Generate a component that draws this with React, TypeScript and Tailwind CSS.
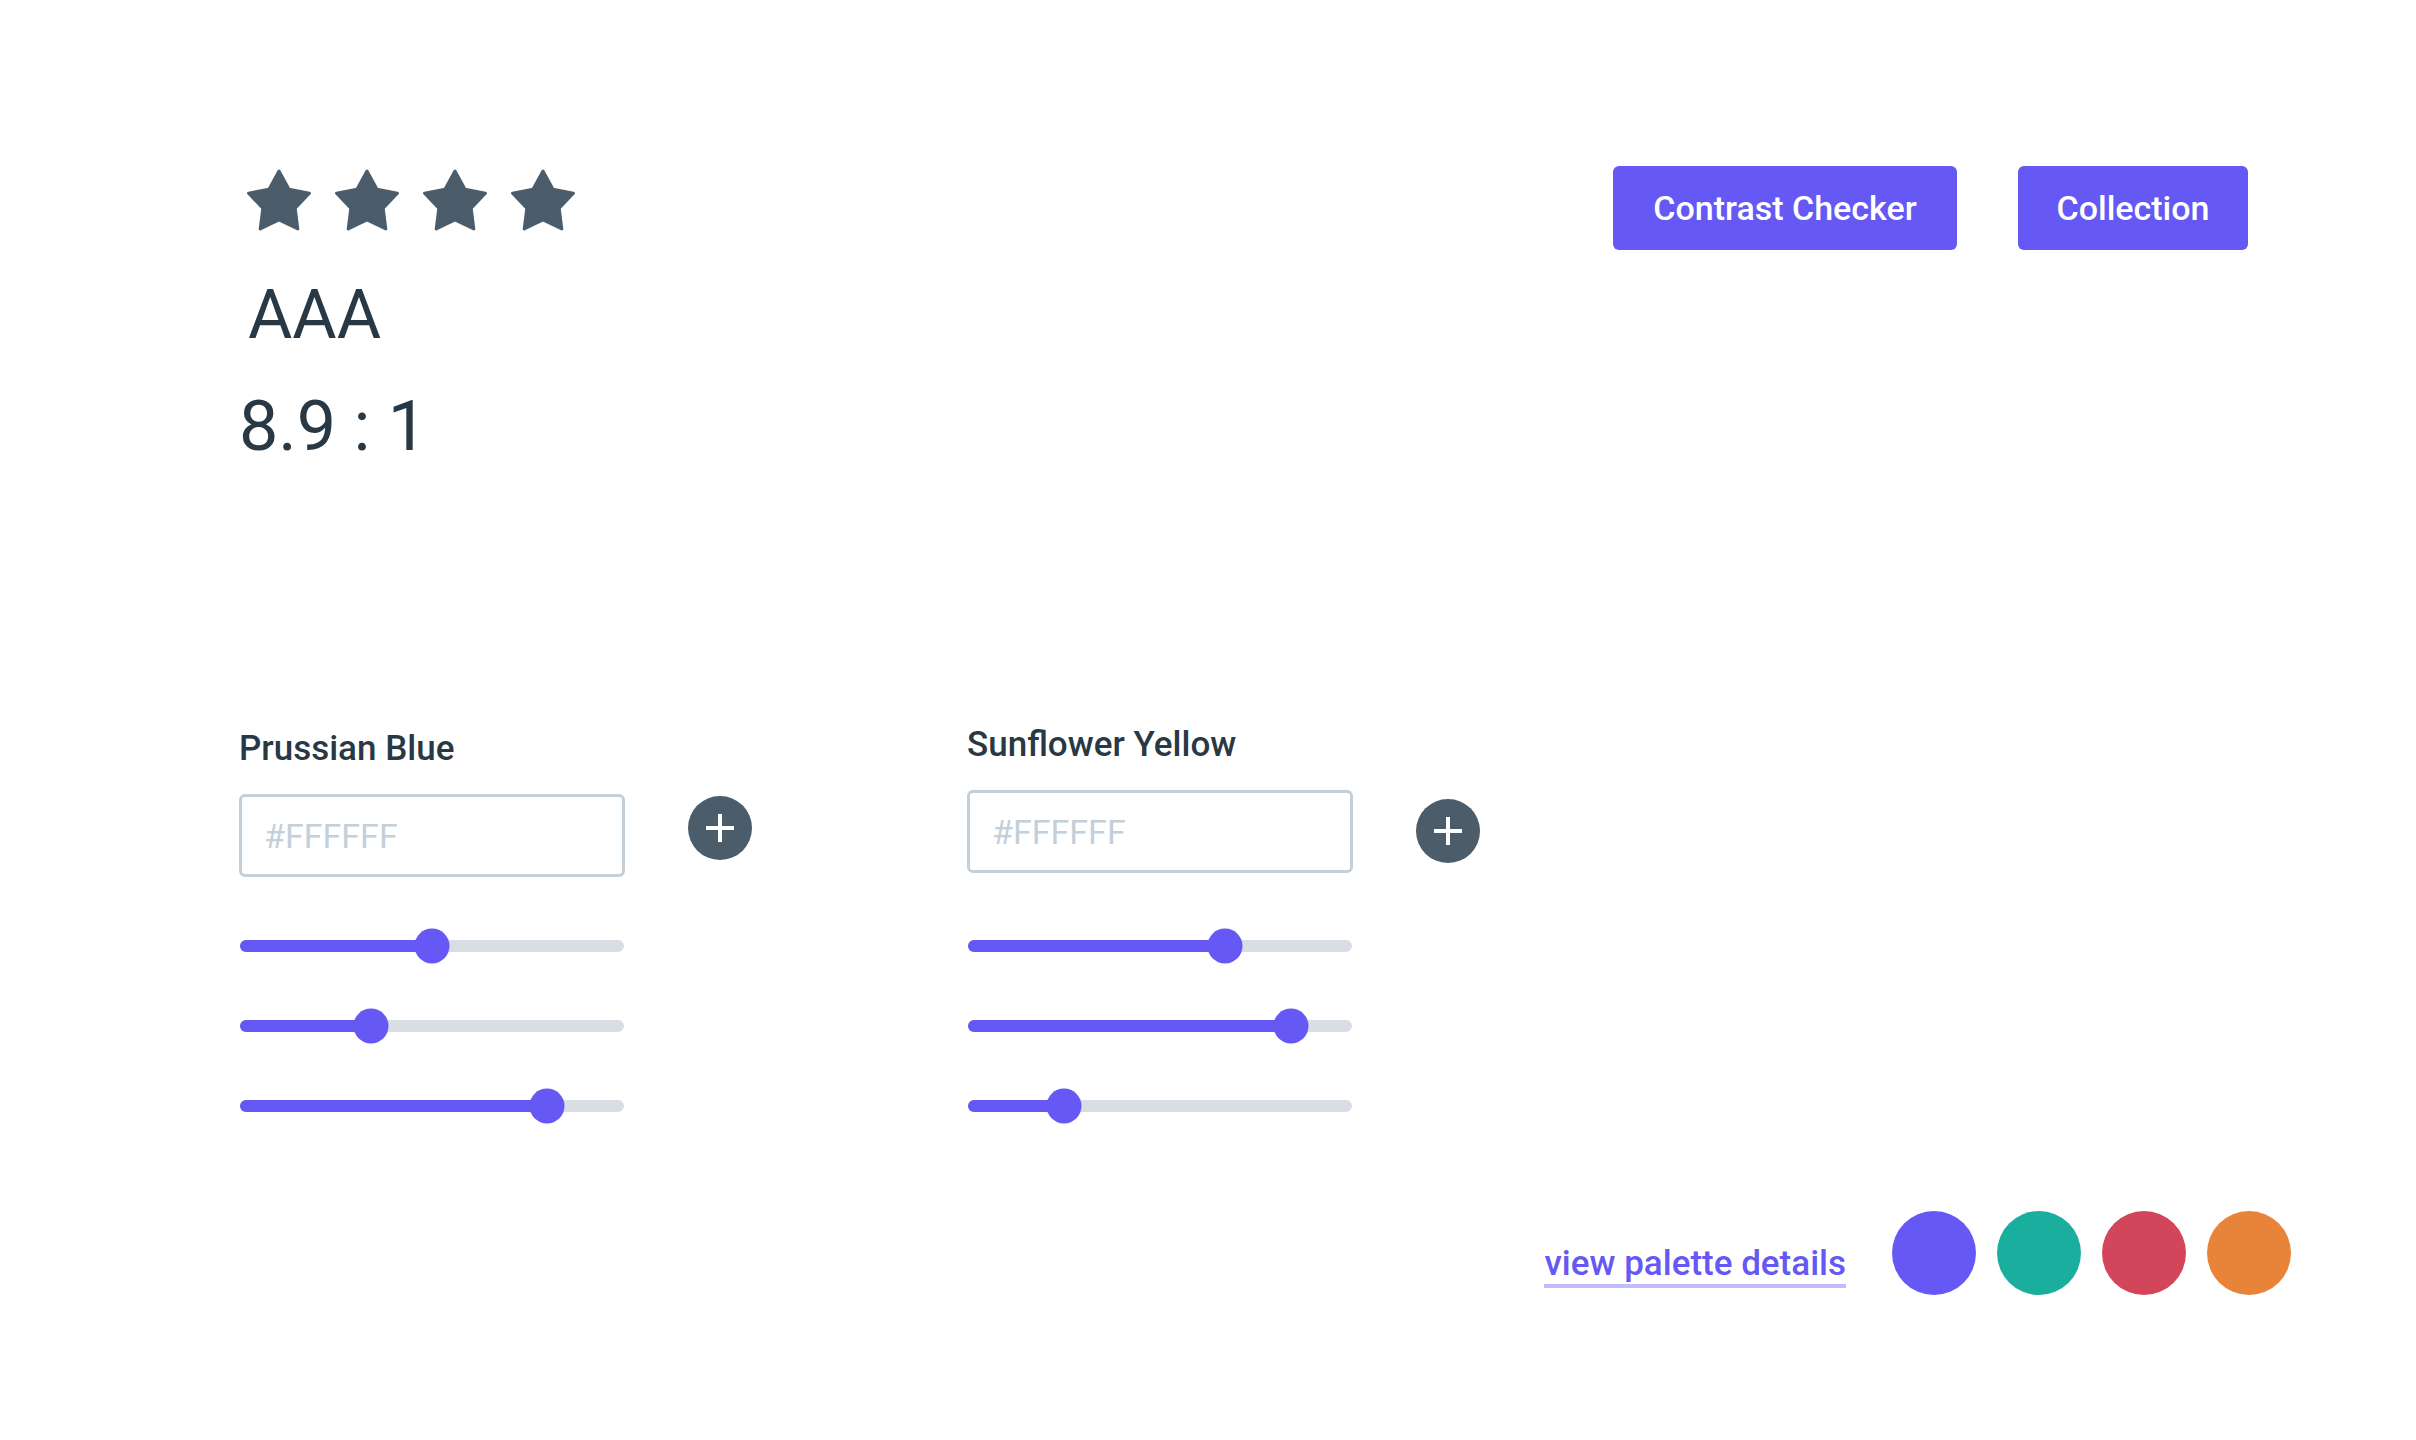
const stars = [0, 1, 2, 3];

const swatches = ["#6558F5", "#1AAE9F", "#D3455B", "#E8833A"];

function Star() {
  return (
    <svg width="64" height="62" viewBox="0 0 64 62" className="block text-[#4B5C6B]">
      <polygon
        points="32,2 41.99,20.25 62.43,24.11 48.17,39.25 50.81,59.89 32,51 13.19,59.89 15.83,39.25 1.57,24.11 22.01,20.25"
        fill="currentColor"
        stroke="currentColor"
        strokeWidth="3"
        strokeLinejoin="round"
      />
    </svg>
  );
}

function AddButton({ className }: { className: string }) {
  return (
    <button className={`flex h-16 w-16 shrink-0 items-center justify-center rounded-full bg-[#4B5C6B] ${className}`}>
      <svg width="28" height="28" viewBox="0 0 28 28">
        <path d="M14 0v28M0 14h28" stroke="white" strokeWidth="4" />
      </svg>
    </button>
  );
}

function Slider({ value }: { value: number }) {
  return (
    <div className="flex h-[35px] items-center">
      <div className="relative ml-[1px] h-3 w-[384px] rounded-full bg-[#D9DEE4]">
        <div className="h-3 rounded-full bg-[#6558F5]" style={{ width: `${value}%` }} />
        <div
          className="absolute top-1/2 h-[35px] w-[35px] -translate-x-1/2 -translate-y-1/2 rounded-full bg-[#6558F5]"
          style={{ left: `${value}%` }}
        />
      </div>
    </div>
  );
}

function ColorPicker({
  name,
  values,
  className,
  plusCls,
  slidersCls,
}: {
  name: string;
  values: number[];
  className: string;
  plusCls: string;
  slidersCls: string;
}) {
  return (
    <div className={`flex flex-col ${className}`}>
      <label className="text-[35px] font-medium leading-none text-[#293845]">{name}</label>
      <div className="mt-[28px] flex items-start gap-[63px]">
        <input
          placeholder="#FFFFFF"
          className="h-[83px] w-[386px] rounded-md border-[3px] border-[#C3CFD9] px-[22px] text-[34px] leading-none text-[#293845] outline-none placeholder:text-[#C3CFD9]"
        />
        <AddButton className={plusCls} />
      </div>
      <div className={`flex flex-col gap-[45px] ${slidersCls}`}>
        {values.map((v, i) => (
          <Slider key={i} value={v} />
        ))}
      </div>
    </div>
  );
}

export default function App() {
  return (
    <div className="min-h-screen w-full bg-white font-['Roboto','Liberation_Sans',sans-serif] text-[#293845]">
      <header className="flex items-start justify-between pl-[239px] pr-[168px] pt-[166px]">
        <div className="flex flex-col pt-[3px]">
          <div className="ml-[8px] flex gap-6">
            {stars.map((s) => (
              <Star key={s} />
            ))}
          </div>
          <div className="ml-[9px] mt-[50px] text-[68px] leading-none">AAA</div>
          <div className="mt-[42px] text-[70px] leading-none">8.9 : 1</div>
        </div>
        <nav className="flex gap-[61px]">
          <button className="h-[84px] w-[344px] rounded-md bg-[#6558F5] text-[34px] font-medium leading-none text-white">
            Contrast Checker
          </button>
          <button className="h-[84px] w-[230px] rounded-md bg-[#6558F5] text-[34px] font-medium leading-none text-white">
            Collection
          </button>
        </nav>
      </header>

      <section className="mt-[266px] flex items-start gap-[215px] pl-[239px]">
        <ColorPicker name="Prussian Blue" values={[50, 34, 80]} className="pt-[4px]" plusCls="mt-[2px]" slidersCls="mt-[51px]" />
        <ColorPicker name="Sunflower Yellow" values={[67, 84, 25]} className="" plusCls="mt-[9px]" slidersCls="mt-[55px]" />
      </section>

      <div className="mt-[88px] flex items-start justify-end gap-[46px] pr-[125px]">
        <a className="mt-[35px] border-b-4 border-[#C1BCFB] pb-[2.5px] text-[35px] font-medium leading-none text-[#6558F5]">
          view palette details
        </a>
        <div className="flex gap-[21px]">
          {swatches.map((c) => (
            <div key={c} className="h-[84px] w-[84px] rounded-full" style={{ background: c }} />
          ))}
        </div>
      </div>
    </div>
  );
}
